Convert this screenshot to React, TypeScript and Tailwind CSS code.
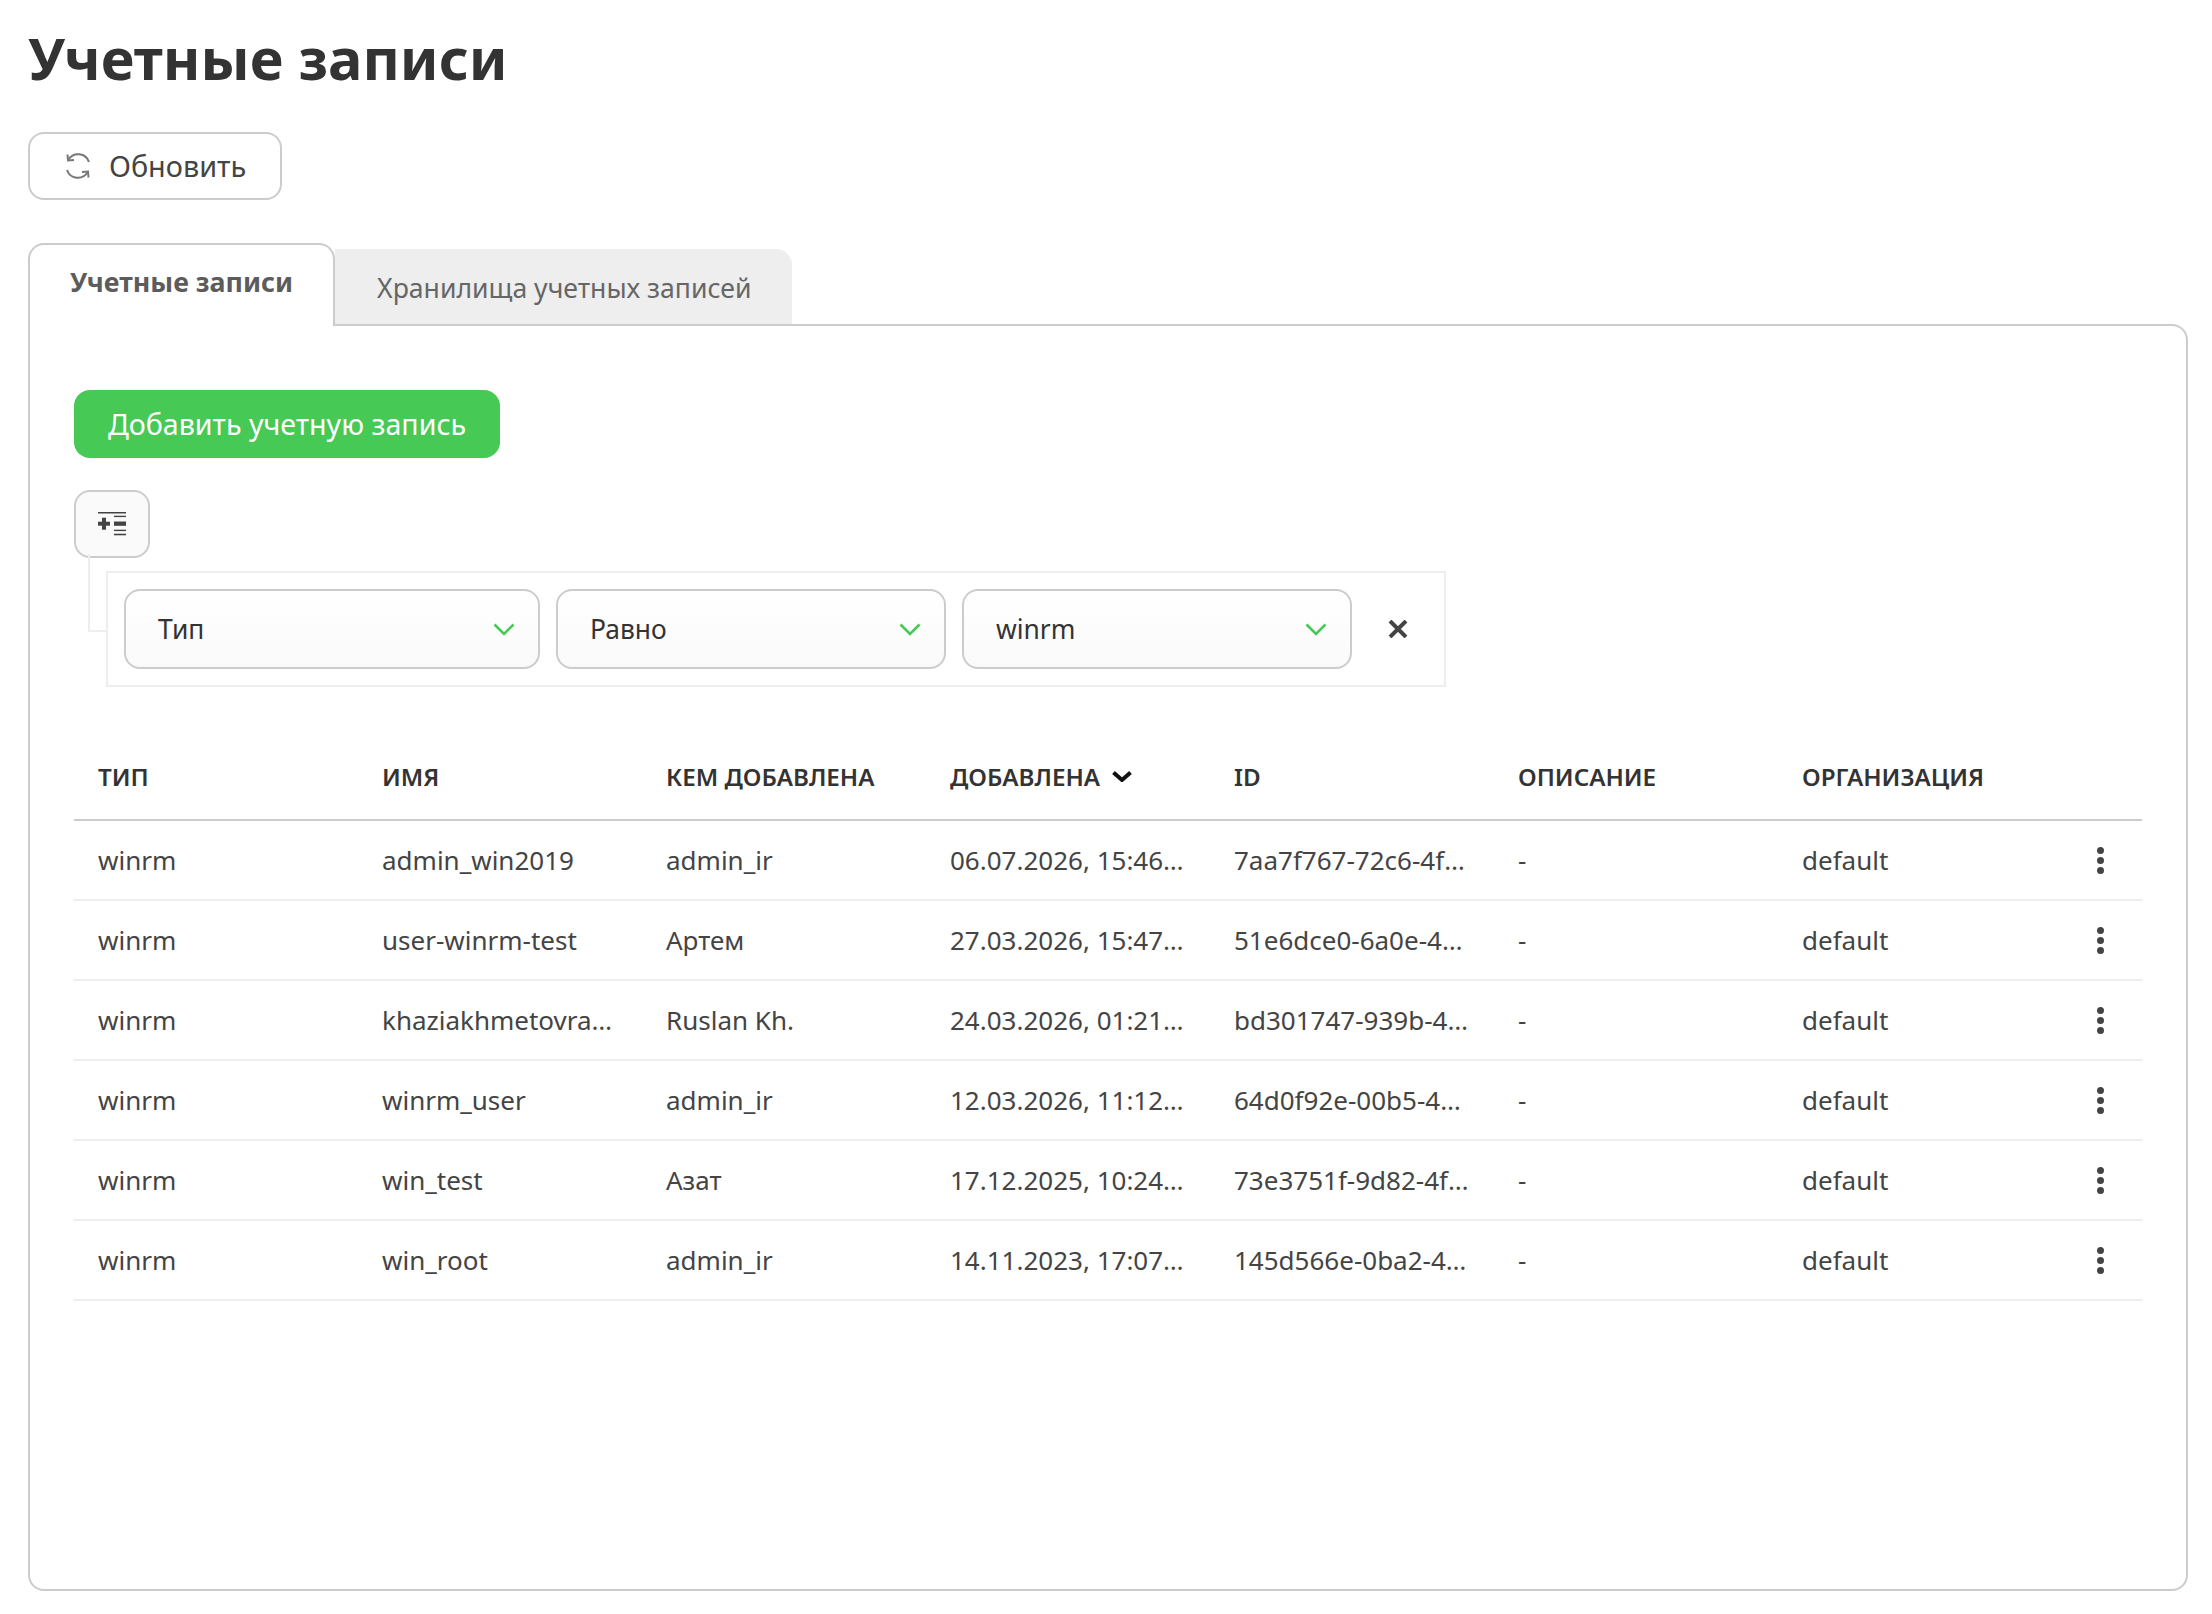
const rows = [
  ["winrm", "admin_win2019", "admin_ir", "06.07.2026, 15:46:12", "7aa7f767-72c6-4f3a-9b1e-2d4c8e6a1f07"],
  ["winrm", "user-winrm-test", "Артем", "27.03.2026, 15:47:33", "51e6dce0-6a0e-4b7d-8c21-93fa10d5e6b2"],
  ["winrm", "khaziakhmetovradik", "Ruslan Kh.", "24.03.2026, 01:21:08", "bd301747-939b-4e52-a6f8-07c1d3b94e10"],
  ["winrm", "winrm_user", "admin_ir", "12.03.2026, 11:12:45", "64d0f92e-00b5-4c19-b3d7-5ea82f7160c4"],
  ["winrm", "win_test", "Азат", "17.12.2025, 10:24:19", "73e3751f-9d82-4fa6-81c4-6b0de29a7f35"],
  ["winrm", "win_root", "admin_ir", "14.11.2023, 17:07:51", "145d566e-0ba2-4d38-97e1-c2f64a08b7d9"],
];

const headers = ["Тип", "Имя", "Кем добавлена", "Добавлена", "ID", "Описание", "Организация"];

function GreenChevron() {
  return (
    <svg width="22" height="13" viewBox="0 0 22 13" fill="none" className="shrink-0">
      <path d="M1.5 1.5 11 11l9.5-9.5" stroke="#46c955" strokeWidth="2.6" />
    </svg>
  );
}

function Select({ label, width }: { label: string; width: string }) {
  return (
    <div className={`${width} h-[80px] flex items-center justify-between pl-[32px] pr-[23px] rounded-2xl border-2 border-[#ccc] bg-gradient-to-b from-white to-[#fafafa] text-[26.4px] text-[#333]`}>
      <span className="pt-[2px]">{label}</span>
      <GreenChevron />
    </div>
  );
}

export default function App() {
  return (
    <div className="w-[2212px] h-[1614px] bg-white overflow-hidden pl-[28px] pr-[24px] text-[#333] font-['Noto_Sans','Open_Sans',sans-serif]">
      <h1 className="pt-[21px] text-[57.6px] leading-[74px] font-bold text-[#333]">Учетные записи</h1>

      <button className="mt-[37px] w-[254px] h-[68px] flex items-center gap-[16px] pl-[33px] rounded-2xl border-2 border-[#ccc] bg-white text-[28.8px] text-[#444]">
        <svg width="30" height="30" viewBox="0 0 30 30" fill="none" stroke="#777" strokeWidth="2">
          <path d="M26 11A11.5 11.5 0 0 0 5.5 8.5" />
          <path d="M4.5 3.5 5 9.5l6-.5" />
          <path d="M4 19A11.5 11.5 0 0 0 24.5 21.5" />
          <path d="M25.5 26.5 25 20.5l-6 .5" />
        </svg>
        Обновить
      </button>

      <div className="mt-[43px] h-[81px] flex items-end">
        <div className="w-[307px] h-[83px] -mb-[2px] z-10 bg-white rounded-t-2xl border-2 border-b-0 border-[#ccc] pl-[40px] pt-[17px] text-[26.8px] font-bold text-[#5c5c5c]">
          Учетные записи
        </div>
        <div className="w-[457px] h-[75px] rounded-tr-2xl bg-[#eee] pl-[42px] pt-[20px] text-[26.6px] text-[#666]">
          Хранилища учетных записей
        </div>
      </div>

      <div className="h-[1267px] rounded-b-2xl rounded-tr-2xl border-2 border-[#ccc] pl-[44px] pr-[44px] pt-[64px]">
        <button className="w-[426px] h-[68px] rounded-2xl bg-[#46c955] text-white text-[28.6px]">Добавить учетную запись</button>

        <div className="mt-[32px] w-[76px] h-[68px] flex items-center justify-center bg-[#fafafa] rounded-2xl border-2 border-[#ccc]">
          <svg width="28" height="24" viewBox="0 0 28 24" fill="#444">
            <rect x="0" y="0" width="28" height="1.5" />
            <rect x="16" y="3.7" width="12" height="1.4" />
            <rect x="16" y="9.5" width="12" height="4.3" />
            <rect x="16" y="17.7" width="12" height="1.4" />
            <rect x="16" y="21.7" width="12" height="1.6" />
            <rect x="0" y="9.7" width="12" height="4" />
            <rect x="4" y="5.7" width="4" height="12" />
          </svg>
        </div>

        <div className="flex">
          <div className="ml-[14px] -mt-[4px] w-[18px] h-[78px] border-l-2 border-b-2 border-[#eee]" />
          <div className="mt-[13px] w-[1340px] h-[116px] flex items-center gap-[16px] pl-[16px] border-2 border-[#eee]">
            <Select label="Тип" width="w-[416px]" />
            <Select label="Равно" width="w-[390px]" />
            <Select label="winrm" width="w-[390px]" />
            <svg width="20" height="18" viewBox="0 0 20 18" fill="none" className="ml-[20px]" stroke="#444" strokeWidth="4">
              <path d="m2 1 16 16M18 1 2 17" />
            </svg>
          </div>
        </div>

        <table className="mt-[46px] w-[2068px] table-fixed border-collapse">
          <colgroup>
            {headers.map((h) => (
              <col key={h} className="w-[284px]" />
            ))}
            <col className="w-[80px]" />
          </colgroup>
          <thead>
            <tr className="h-[87px] border-b-2 border-[#ccc]">
              {headers.map((h) => (
                <th key={h} className="px-[24px] pt-[2px] text-left text-[24.2px] font-semibold uppercase text-[#333]">
                  <span className="flex items-center gap-[12px]">
                    {h}
                    {h === "Добавлена" && (
                      <svg width="20" height="11" viewBox="0 0 20 11" fill="none" stroke="#111" strokeWidth="4">
                        <path d="m1.5 1.5 8.5 7.5 8.5-7.5" />
                      </svg>
                    )}
                  </span>
                </th>
              ))}
              <th />
            </tr>
          </thead>
          <tbody>
            {rows.map((r) => (
              <tr key={r[4]} className="h-[80px] border-b-2 border-[#eee] text-[26px] text-[#444]">
                {r.map((c, i) => (
                  <td key={i} className="px-[24px] truncate">{c}</td>
                ))}
                <td className="px-[24px]">-</td>
                <td className="px-[24px]">default</td>
                <td>
                  <div className="ml-[35px] w-[7px] flex flex-col gap-[3px]">
                    <span className="size-[7px] rounded-full bg-[#444]" />
                    <span className="size-[7px] rounded-full bg-[#444]" />
                    <span className="size-[7px] rounded-full bg-[#444]" />
                  </div>
                </td>
              </tr>
            ))}
          </tbody>
        </table>
      </div>
    </div>
  );
}
